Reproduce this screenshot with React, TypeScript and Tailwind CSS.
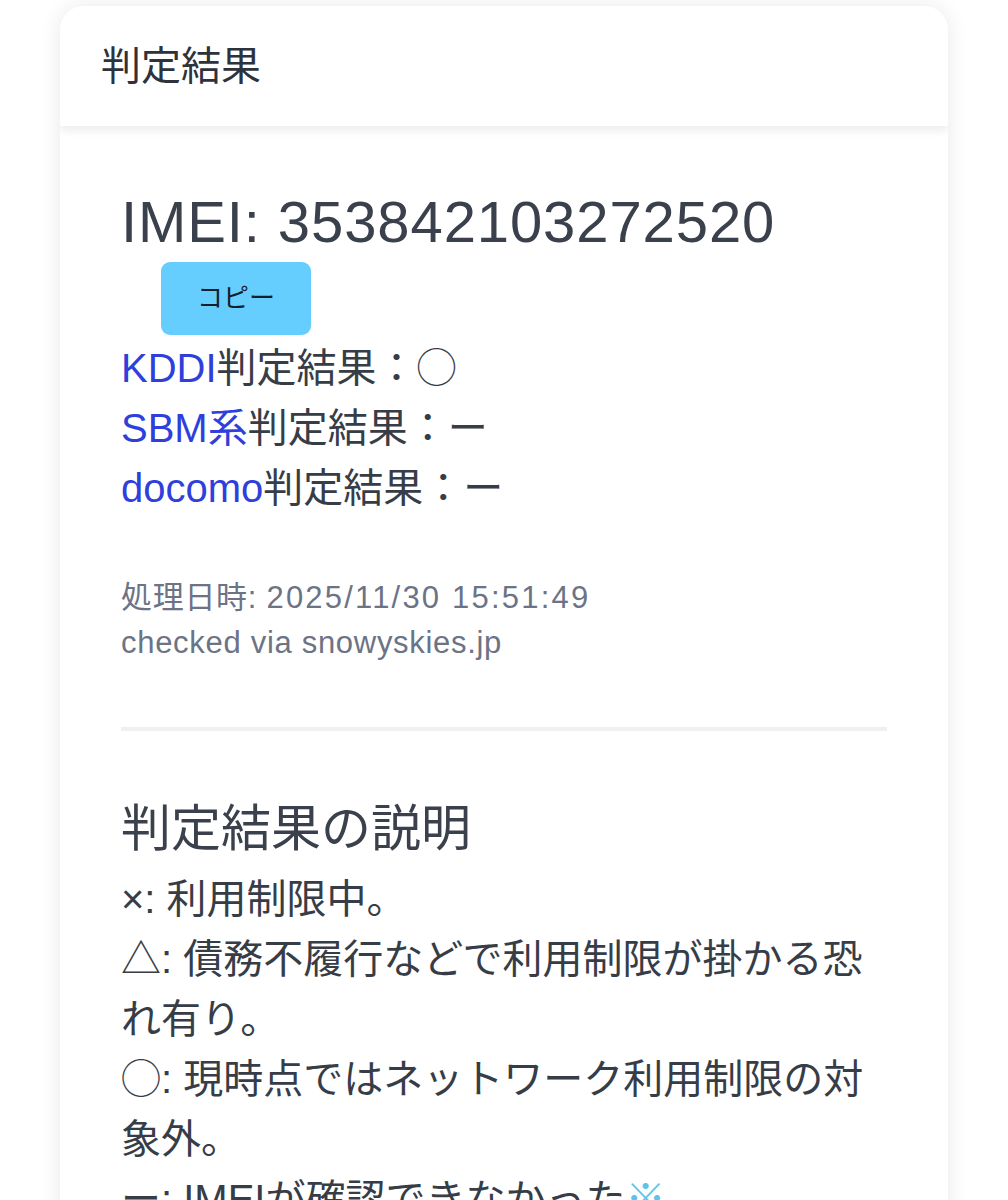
import React from "react";

const FONT = { fontFamily: '"Liberation Sans", "Noto Sans CJK JP", sans-serif' };

export default function App() {
  return (
    <div className="min-h-[1200px] bg-white px-[60px] pt-[6px]" style={FONT}>
      <div className="overflow-hidden rounded-t-[24px] bg-white shadow-[0_0_22px_rgba(0,0,0,0.09)]">
        <div className="relative z-10 flex h-[120px] items-center bg-white pl-[41px] shadow-[0_5px_8px_rgba(0,0,0,0.07)]">
          <h2 className="text-[40px] leading-none text-[#2d323b]">判定結果</h2>
        </div>
        <div className="px-[61px] pb-[40px] pt-[56px] text-[#373d47]">
          <div className="text-[58px] leading-[80px] tracking-[0.9px] text-[#3a404c]">IMEI: 353842103272520</div>
          <button className="ml-[40px] flex h-[73px] w-[150px] items-center justify-center rounded-[9px] bg-[#66cdff] text-[26px] text-[#16202c]">
            コピー
          </button>
          <div className="mt-[3px] text-[40px] leading-[60px]">
            <div>
              <span className="text-[#2f3fdc]">KDDI</span>判定結果：◯
            </div>
            <div>
              <span className="text-[#2f3fdc]">SBM系</span>判定結果：ー
            </div>
            <div>
              <span className="text-[#2f3fdc]">docomo</span>判定結果：ー
            </div>
          </div>
          <div className="mt-[57px] text-[31px] leading-[45px] tracking-[0.7px] text-[#6c7385]">
            <div>
              処理日時: <span className="tracking-[2.2px]">2025/11/30 15:51:49</span>
            </div>
            <div>checked via snowyskies.jp</div>
          </div>
          <div className="mt-[62px] h-[4px] bg-[#f0f0f0]" />
          <div className="mt-[58px] text-[50px] leading-[80px] text-[#3a404c]">判定結果の説明</div>
          <div className="text-[40px] leading-[60px] text-[#373d47]">
            <div>×: 利用制限中。</div>
            <div>△: 債務不履行などで利用制限が掛かる恐れ有り。</div>
            <div>◯: 現時点ではネットワーク利用制限の対象外。</div>
            <div>
              ー: IMEIが確認できなかった<span className="text-[#5cc3ea]">※</span>
            </div>
          </div>
        </div>
      </div>
    </div>
  );
}
